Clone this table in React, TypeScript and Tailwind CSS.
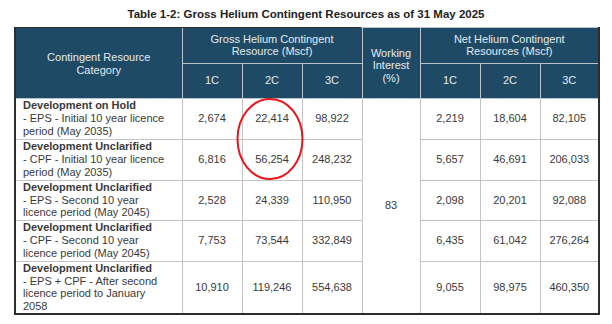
type Row = {
  title: string;
  lines: string[];
  gross: string[];
  net: string[];
  h: string;
};

const rows: Row[] = [
  {
    title: "Development on Hold",
    lines: ["- EPS - Initial 10 year licence", "period (May 2035)"],
    gross: ["2,674", "22,414", "98,922"],
    net: ["2,219", "18,604", "82,105"],
    h: "h-[41px]",
  },
  {
    title: "Development Unclarified",
    lines: ["- CPF - Initial 10 year licence", "period (May 2035)"],
    gross: ["6,816", "56,254", "248,232"],
    net: ["5,657", "46,691", "206,033"],
    h: "h-[41px]",
  },
  {
    title: "Development Unclarified",
    lines: ["- EPS - Second 10 year", "licence period (May 2045)"],
    gross: ["2,528", "24,339", "110,950"],
    net: ["2,098", "20,201", "92,088"],
    h: "h-[40px]",
  },
  {
    title: "Development Unclarified",
    lines: ["- CPF - Second 10 year", "licence period (May 2045)"],
    gross: ["7,753", "73,544", "332,849"],
    net: ["6,435", "61,042", "276,264"],
    h: "h-[41px]",
  },
  {
    title: "Development Unclarified",
    lines: ["- EPS + CPF - After second", "licence period to January", "2058"],
    gross: ["10,910", "119,246", "554,638"],
    net: ["9,055", "98,975", "460,350"],
    h: "h-[52px]",
  },
];

const th = "border border-[#b9c4cc] font-normal text-center align-middle";
const td = "border border-[#c4c4c4] text-center align-middle";

export default function App() {
  return (
    <div
      className="relative w-[612px] h-[324px] bg-white text-[11px] text-[#3a3a3a]"
      style={{ fontFamily: '"Liberation Sans", Arial, sans-serif' }}
    >
      <div className="pt-[7px] h-[21px] text-center text-[11.5px] font-bold leading-[14px] text-[#222]">
        Table 1-2: Gross Helium Contingent Resources as of 31 May 2025
      </div>

      {/* table box */}
      <div className="ml-[14px] mt-[6px] w-[586px] border-l-2 border-r-2 border-b-2 border-[#2e2e2e]">
        <div className="flex h-px">
          <div className="w-[345px] bg-[#2e2e2e]" />
          <div className="flex-1 bg-[#b9c4cc]" />
        </div>
        <table className="w-[582px] table-fixed border-collapse border-hidden leading-[12.7px]">
          <colgroup>
            <col className="w-[166px]" />
            <col className="w-[60px]" />
            <col className="w-[60px]" />
            <col className="w-[60px]" />
            <col className="w-[58px]" />
            <col className="w-[60px]" />
            <col className="w-[60px]" />
            <col className="w-[58px]" />
          </colgroup>
          <thead className="bg-[#1e4a66] text-[#e4eaee]">
            <tr className="h-[35px]">
              <th rowSpan={2} className={th + " pt-[2px]"}>
                Contingent Resource
                <br />
                Category
              </th>
              <th colSpan={3} className={th}>
                Gross Helium Contingent
                <br />
                Resource (Mscf)
              </th>
              <th rowSpan={2} className={th + " pt-[6px]"}>
                Working
                <br />
                Interest
                <br />
                (%)
              </th>
              <th colSpan={3} className={th}>
                Net Helium Contingent
                <br />
                Resources (Mscf)
              </th>
            </tr>
            <tr className="h-[35px]">
              <th className={th}>1C</th>
              <th className={th}>2C</th>
              <th className={th}>3C</th>
              <th className={th}>1C</th>
              <th className={th}>2C</th>
              <th className={th}>3C</th>
            </tr>
          </thead>
          <tbody>
            {rows.map((r, i) => (
              <tr key={i} className={r.h}>
                <td className="border border-[#c4c4c4] pl-[7px] align-middle">
                  <div className="font-bold">{r.title}</div>
                  {r.lines.map((l, j) => (
                    <div key={j}>{l}</div>
                  ))}
                </td>
                {r.gross.map((g, j) => (
                  <td key={"g" + j} className={td}>
                    {g}
                  </td>
                ))}
                {i === 0 && (
                  <td rowSpan={5} className={td}>
                    83
                  </td>
                )}
                {r.net.map((n, j) => (
                  <td key={"n" + j} className={td}>
                    {n}
                  </td>
                ))}
              </tr>
            ))}
          </tbody>
        </table>
      </div>

      {/* red marker round 2C values */}
      <svg
        className="absolute left-[236px] top-[97px]"
        width="68"
        height="84"
        viewBox="0 0 68 84"
      >
        <ellipse cx="34" cy="42" rx="32.5" ry="40" fill="none" stroke="#e8141b" strokeWidth="2" />
      </svg>
    </div>
  );
}
